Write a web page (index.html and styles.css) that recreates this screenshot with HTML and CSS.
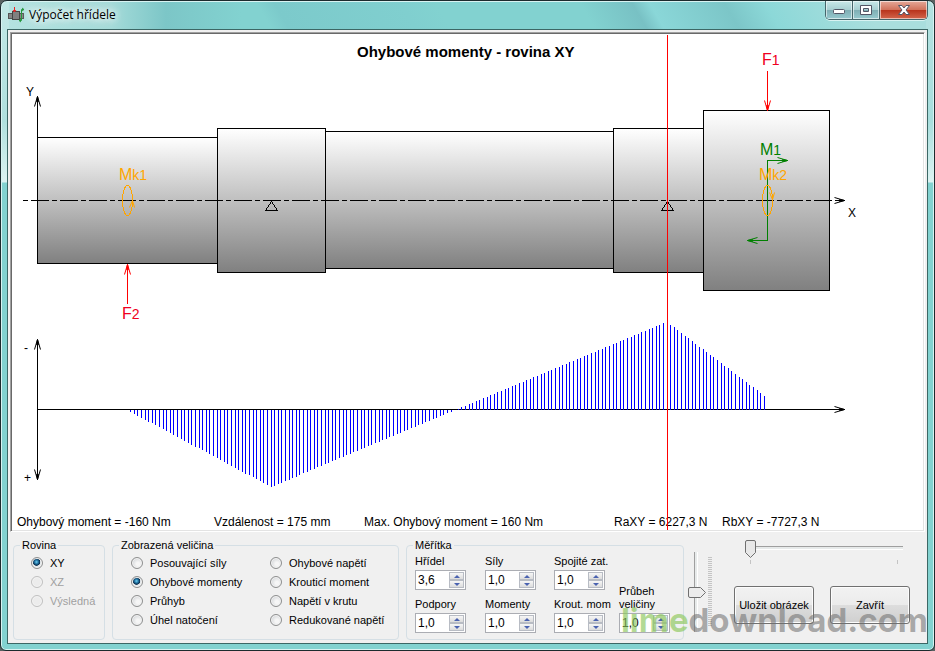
FILE: index.html
```html
<!DOCTYPE html>
<html lang="cs">
<head>
<meta charset="utf-8">
<title>Výpočet hřídele</title>
<link rel="stylesheet" href="styles.css">
</head>
<body>
<div class="window">
  <header class="titlebar">
    <svg class="app-icon" width="16" height="16" viewBox="0 0 16 16" aria-hidden="true">
      <path d="M0 6h4v6H0z" fill="#555"/><path d="M1 7h3v4H1z" fill="#858585"/>
      <path d="M4 4h8v9H4z" fill="#454545"/><path d="M5 5h6v7H5z" fill="#808080"/>
      <path d="M12 6h4v6h-4z" fill="#555"/><path d="M12 7h3v4h-3z" fill="#858585"/>
      <path d="M6.500 0v5M5 3l1.500 2L8 3" fill="none" stroke="#e22"/>
      <path d="M16 2.500h-2.500v11H11M14 1l2 1.500L14 4M13 12l-2 1.500 2 1.500" fill="none" stroke="#23963a"/>
    </svg>
    <h1 class="title">Výpočet hřídele</h1>
    <div class="caption-buttons">
      <button class="cap" type="button" aria-label="Minimalizovat"><svg width="14" height="12" viewBox="0 0 14 12"><rect x="1.500" y="5.500" width="11" height="4" rx="1" fill="#fff" stroke="#535666"/></svg></button>
      <button class="cap" type="button" aria-label="Maximalizovat"><svg width="14" height="12" viewBox="0 0 14 12"><path d="M1.500 1.500h11v9h-11zM4.500 4.500v3h5v-3z" fill="#fff" fill-rule="evenodd" stroke="#535666"/></svg></button>
      <button class="cap cap-close" type="button" aria-label="Zavřít okno"><svg width="14" height="12" viewBox="0 0 14 12"><path d="M1.500 1.500h3.500l2 2.500 2-2.500h3.500L9 6l3.500 4.500H9L7 8l-2 2.500H1.500L5 6z" fill="#fff" stroke="#535666"/></svg></button>
    </div>
  </header>
  <main class="content">
    <section class="canvas">
      <div class="status">
        <span>Ohybový moment = -160 Nm</span>
        <span>Vzdálenost = 175 mm</span>
        <span>Max. Ohybový moment = 160 Nm</span>
        <span>RaXY = 6227,3 N</span>
        <span>RbXY = -7727,3 N</span>
      </div>
      <svg class="plot" viewBox="12 34 911 496" preserveAspectRatio="xMinYMin meet">
        <defs>
          <linearGradient id="steel" x1="0" y1="0" x2="0" y2="1"><stop offset="0" stop-color="#fff"/><stop offset="1" stop-color="#808080"/></linearGradient>
        </defs>
        <g transform="translate(.5 .5)" fill="none" stroke="#000" shape-rendering="crispEdges">
          <g fill="url(#steel)">
            <rect x="37" y="137" width="180" height="126"/>
            <rect x="217" y="128" width="108" height="144"/>
            <rect x="325" y="131" width="288" height="137"/>
            <rect x="613" y="128" width="90" height="144"/>
            <rect x="703" y="110" width="126" height="180"/>
          </g>
          <path d="M22 200H834" stroke-dasharray="5 3 18 3"/>
          <path d="M834 200H844M37 96V200M37 339V479M37 409H844"/>
          <path d="M271 201l-6 9h12zM667 201l-6 9h12z"/>
          <path id="moments" stroke="#00f"/>
          <path d="M667 34V529" stroke="#f00"/>
          <g stroke="#f00"><path d="M767 70V110M127 264V303"/></g>
          <path d="M787 160H767V240H747" stroke="#008000"/>
          <g stroke="#ffa500"><ellipse cx="127" cy="200" rx="5" ry="15"/><ellipse cx="767" cy="200" rx="5" ry="15"/></g>
        </g>
        <g transform="translate(.5 .5)" fill="none" stroke="#000">
          <path d="M34 106l3-10 3 10M36 101l1-5 1 5zM34 349l3-10 3 10M36 344l1-5 1 5zM34 469l3 10 3-10M36 474l1 5 1-5z"/>
          <path d="M834 197l10 3-10 3M839 199l5 1-5 1zM834 406l10 3-10 3M839 408l5 1-5 1z"/>
          <path stroke="#f00" d="M764 100l3 10 3-10M766 105l1 5 1-5zM124 274l3-10 3 10M126 269l1-5 1 5z"/>
          <path stroke="#008000" d="M777 157l10 3-10 3M782 159l5 1-5 1zM757 237l-10 3 10 3M752 239l-5 1 5 1z"/>
          <path stroke="#ffa500" d="M129 207l3-7 2 7M132 203v-3M769 192l3 7 2-7M772 196v3"/>
        </g>
        <text class="heading" x="357" y="57">Ohybové momenty - rovina XY</text>
        <text class="axis" x="26" y="96">Y</text>
        <text class="axis" x="848" y="217">X</text>
        <text class="axis" x="24" y="352">-</text>
        <text class="axis" x="24" y="482">+</text>
        <text class="load force" x="762" y="65">F<tspan class="sub">1</tspan></text>
        <text class="load force" x="122" y="319">F<tspan class="sub">2</tspan></text>
        <text class="load moment" x="760" y="155">M<tspan class="sub">1</tspan></text>
        <text class="load torque" x="119" y="180">M<tspan class="sub">k1</tspan></text>
        <text class="load torque" x="759" y="180">M<tspan class="sub">k2</tspan></text>
      </svg>
    </section>

    <form class="panel">
      <fieldset class="group plane">
        <legend>Rovina</legend>
        <div class="radios">
          <label><input type="radio" name="plane" checked>XY</label>
          <label class="off"><input type="radio" name="plane" disabled>XZ</label>
          <label class="off"><input type="radio" name="plane" disabled>Výsledná</label>
        </div>
      </fieldset>
      <fieldset class="group quantity">
        <legend>Zobrazená veličina</legend>
        <div class="radios two">
          <label><input type="radio" name="quantity">Posouvající síly</label>
          <label><input type="radio" name="quantity" checked>Ohybové momenty</label>
          <label><input type="radio" name="quantity">Průhyb</label>
          <label><input type="radio" name="quantity">Úhel natočení</label>
          <label><input type="radio" name="quantity">Ohybové napětí</label>
          <label><input type="radio" name="quantity">Krouticí moment</label>
          <label><input type="radio" name="quantity">Napětí v krutu</label>
          <label><input type="radio" name="quantity">Redukované napětí</label>
        </div>
      </fieldset>
      <fieldset class="group scales">
        <legend>Měřítka</legend>
        <div class="fields">
          <div class="field"><label for="s1">Hřídel</label><div class="spin"><input id="s1" type="text" value="3,6"><button type="button" aria-label="Více"></button><button class="down" type="button" aria-label="Méně"></button></div></div>
          <div class="field"><label for="s2">Síly</label><div class="spin"><input id="s2" type="text" value="1,0"><button type="button" aria-label="Více"></button><button class="down" type="button" aria-label="Méně"></button></div></div>
          <div class="field"><label for="s3">Spojité zat.</label><div class="spin"><input id="s3" type="text" value="1,0"><button type="button" aria-label="Více"></button><button class="down" type="button" aria-label="Méně"></button></div></div>
          <div class="field tall"><label for="s7">Průbeh<br>veličiny</label><div class="spin"><input id="s7" type="text" value="1,0"><button type="button" aria-label="Více"></button><button class="down" type="button" aria-label="Méně"></button></div></div>
          <div class="field"><label for="s4">Podpory</label><div class="spin"><input id="s4" type="text" value="1,0"><button type="button" aria-label="Více"></button><button class="down" type="button" aria-label="Méně"></button></div></div>
          <div class="field"><label for="s5">Momenty</label><div class="spin"><input id="s5" type="text" value="1,0"><button type="button" aria-label="Více"></button><button class="down" type="button" aria-label="Méně"></button></div></div>
          <div class="field"><label for="s6">Krout. mom</label><div class="spin"><input id="s6" type="text" value="1,0"><button type="button" aria-label="Více"></button><button class="down" type="button" aria-label="Méně"></button></div></div>
        </div>
      </fieldset>
      <div class="vslider"><input type="range" aria-label="Svislé měřítko" value="50"><span class="vticks"></span></div>
      <div class="actions">
        <div class="hslider"><input type="range" aria-label="Poloha řezu" value="0"><span class="hticks"></span></div>
        <div class="buttons"><button class="btn" type="button">Uložit obrázek</button><button class="btn" type="button">Zavřít</button></div>
      </div>
    </form>
  </main>
  <div class="watermark"><span>lime</span>download.com</div>
</div>
<script src="script.js"></script>
</body>
</html>
```
FILE: styles.css
```css
* { box-sizing: border-box; }
body {
  margin: 0;
  background: #5a6262;
  color: #000;
  font: 12px/14px "Liberation Sans", Arial, sans-serif;
}
button, input { font: inherit; color: inherit; }

.window {
  position: relative;
  display: flex;
  flex-direction: column;
  min-height: 100vh;
  padding: 0 6px 6px;
  border: 1px solid #1c2b2e;
  border-radius: 7px 7px 6px 6px;
  box-shadow: inset 0 0 0 1px #d8f3f2;
  background:
    linear-gradient(#c2e8e6 0, #b0e0de 120px, #dcf3f2 181px, transparent 182px) left / 8px 100% no-repeat,
    linear-gradient(#b4e2e1 0, #a8dedd 120px, #dcf3f2 181px, transparent 182px) right / 8px 100% no-repeat,
    linear-gradient(90deg, #b5e3e1 0, #a4dbd9 110px, #7cc6c7 165px, transparent 240px) top / 100% 29px no-repeat,
    linear-gradient(60deg, transparent 235px, #7ccacb 250px, #80cfcf 360px, transparent 390px, transparent 515px, #78c1c4 560px, #8ad7d8 575px, #7cc6c8 640px, #8cd8d8 675px, #a9dedd 760px) top / 100% 29px no-repeat,
    #82d2d0;
}
.titlebar { display: flex; height: 28px; align-items: center; padding-left: 1px; }
.title {
  margin: 0 0 0 5px;
  font: 12px/16px "Open Sans", "Noto Sans", sans-serif;
  text-shadow: 0 0 6px #fff, 0 0 10px #fff, 0 0 14px #fff;
}
.caption-buttons {
  display: flex;
  align-self: flex-start;
  height: 19px;
  margin-left: auto;
  border: 1px solid #45666b;
  border-top: 0;
  border-radius: 0 0 5px 5px;
  overflow: hidden;
  box-shadow: 0 1px 0 #d8f3f2;
}
.cap {
  display: grid;
  place-items: center;
  width: 27px;
  padding: 0;
  border: 0;
  border-right: 1px solid #45666b;
  background: linear-gradient(#c8e8e8 0, #a8cfd2 48%, #7eadb3 50%, #97cacf 100%);
  box-shadow: inset 0 0 0 1px #ffffff90;
}
.cap-close {
  width: 47px;
  border-right: 0;
  background: linear-gradient(#e5a999 0, #d1735c 48%, #b8321b 50%, #d3664c 100%);
}

.content {
  display: flex;
  flex: 1;
  flex-direction: column;
  padding: 2px;
  border: 1px solid #3c6765;
  background: #f0f0f0;
}
.canvas {
  display: grid;
  border: 1px solid;
  border-color: #a0a0a0 #fff #fff #a0a0a0;
  background: #fff;
  box-shadow: inset 1px 1px #696969, inset -1px -1px #e3e3e3;
  padding: 1px;
}
.canvas > * { grid-area: 1 / 1; }
.plot { display: block; width: 100%; height: auto; }
.status {
  display: grid;
  grid-template-columns: 197fr 150fr 250fr 108fr 201fr;
  align-self: end;
  padding: 0 0 1px 5px;
  white-space: nowrap;
}
.heading { font-size: 15px; font-weight: bold; }
.axis { font-size: 12px; }
.load { font-size: 16px; }
.sub { font-size: 14px; }
.force { fill: #f00020; }
.moment { fill: #008000; }
.torque { fill: #ffa500; }

.panel {
  display: flex;
  flex: 1;
  gap: 7px;
  padding: 6px 13px 1px 3px;
  font-size: 11px;
}
.group {
  min-width: 0;
  margin: 0;
  padding: 0 8px;
  border: 1px solid #d5dfe5;
  border-radius: 4px;
}
.group legend { padding: 0 2px; margin-left: -2px; }
.plane { flex: 0 0 92px; }
.quantity { flex: 0 0 287px; }
.scales { flex: 0 0 278px; }
.radios { display: grid; grid-auto-rows: 19px; padding: 1px 0 0 9px; }
.radios.two { grid-template: repeat(4, 19px) / 139px auto; grid-auto-flow: column; padding-left: 10px; }
.radios label { display: flex; align-items: center; gap: 7px; white-space: nowrap; }
.radios input {
  appearance: none;
  flex: none;
  width: 12px;
  height: 12px;
  margin: 0;
  border: 1px solid #8e8f8f;
  border-radius: 50%;
  background: radial-gradient(circle at 60% 60%, #f6f6f6 20%, #c4c8cc 100%);
  box-shadow: inset 0 0 0 1px #f4f4f4;
}
.radios input:checked {
  background: radial-gradient(circle at 45% 40%, #6fd0f2 0, #1d6d9c 25%, #0c2c4a 42%, #e4e8ea 50%);
}
.radios .off { color: #a0a0a0; }
.radios .off input { border-color: #c0c0c0; background: #ececec; }

.fields {
  display: grid;
  grid-template: 43px 43px / 70px 69px 65px auto;
}
.field { display: flex; flex-direction: column; gap: 2px; padding-top: 2px; white-space: nowrap; }
.field.tall { grid-area: 1 / 4 / 3 / 5; justify-content: flex-end; padding-bottom: 5px; }
.tall label { line-height: 13px; }
.spin {
  display: grid;
  grid-template: 8px 8px / 1fr 15px;
  width: 51px;
  height: 20px;
  padding: 1px;
  border: 1px solid #abadb3;
  background: #fff;
}
.spin input {
  grid-row: 1 / 3;
  min-width: 0;
  width: 100%;
  padding: 0 0 0 1px;
  border: 0;
  background: none;
  font-size: 12px;
}
.spin button {
  display: grid;
  place-items: center;
  padding: 0;
  border: 1px solid #b8bcc4;
  background: linear-gradient(#f6f6f6, #dcdcdc);
}
.spin button::before {
  content: "";
  border: 3px solid transparent;
  border-top: 0;
  border-bottom-color: #4a62b0;
}
.spin .down::before { border-top: 3px solid #4a62b0; border-bottom: 0; }

.vslider { display: flex; align-items: flex-start; width: 26px; padding: 14px 0 0; margin-left: -3px; }
.vslider input {
  appearance: none;
  writing-mode: vertical-lr;
  width: 18px;
  height: 80px;
  margin: 0;
  background: linear-gradient(90deg, #9f9f9f 1px, #e7eaea 1px, #e7eaea 3px, #fff 3px) 6px 0 / 4px 100% no-repeat;
}
.vslider input::-webkit-slider-thumb {
  appearance: none;
  width: 18px;
  height: 11px;
  background: url("data:image/svg+xml,%3Csvg xmlns='http://www.w3.org/2000/svg' width='18' height='11'%3E%3Cpath d='M2 .5h10.500l5 5-5 5H2Q.5 10.500 .5 9V2Q.5 .5 2 .5z' fill='%23ececec' stroke='%23707070'/%3E%3C/svg%3E");
}
.vticks {
  width: 4px;
  height: 70px;
  margin: 5px 0 0 2px;
  background: repeating-linear-gradient(#c4c4c4 0 1px, transparent 1px 2px);
}
.actions { flex: 1; padding: 2px 0 0 24px; }
.hslider { width: 158px; }
.hslider input {
  appearance: none;
  display: block;
  width: 100%;
  height: 18px;
  margin: 0;
  background: linear-gradient(#9f9f9f 1px, #e7eaea 1px, #e7eaea 3px, #fff 3px) 0 6px / 100% 4px no-repeat;
}
.hslider input::-webkit-slider-thumb {
  appearance: none;
  width: 11px;
  height: 18px;
  background: url("data:image/svg+xml,%3Csvg xmlns='http://www.w3.org/2000/svg' width='11' height='18'%3E%3Cpath d='M2 .5h7q1.500 0 1.500 1.500v10.500l-5 5-5-5V2Q.5 .5 2 .5z' fill='%23e8e8e8' stroke='%23707070'/%3E%3C/svg%3E");
}
.hticks {
  display: block;
  height: 4px;
  margin: 2px 5px 0;
  border: solid #c4c4c4;
  border-width: 0 1px;
}
.buttons { display: flex; gap: 16px; margin: 22px 0 0 -11px; }
.btn {
  width: 80px;
  height: 38px;
  padding: 0;
  border: 1px solid #707070;
  border-radius: 3px;
  background: linear-gradient(#f2f2f2 0, #ebebeb 50%, #dddddd 50%, #cfcfcf 100%);
  box-shadow: inset 0 0 0 1px #fcfcfc;
  white-space: nowrap;
}
.watermark {
  position: absolute;
  right: 6px;
  bottom: 10px;
  color: #70707094;
  font: bold 33px/40px Inter, sans-serif;
  pointer-events: none;
}
.watermark span { color: #8cc85ca8; }
```
FILE: script.js
```js
// Hatch of the bending moment diagram: one vertical line per millimetre (3.6 px).
const nodes = [[127, 409], [271, 486], [667, 321], [766, 396]];
const step = 3.6;
let d = "";
for (let x = nodes[0][0] + step; x < nodes[3][0]; x += step) {
  const i = nodes.findIndex((n) => n[0] >= x - 0.01);
  const [x0, y0] = nodes[i - 1];
  const [x1, y1] = nodes[i];
  const y = Math.round(y0 + (y1 - y0) * (x - x0) / (x1 - x0));
  d += `M${Math.floor(x + 0.01)} 409V${y}`;
}
document.getElementById("moments").setAttribute("d", d);
```
